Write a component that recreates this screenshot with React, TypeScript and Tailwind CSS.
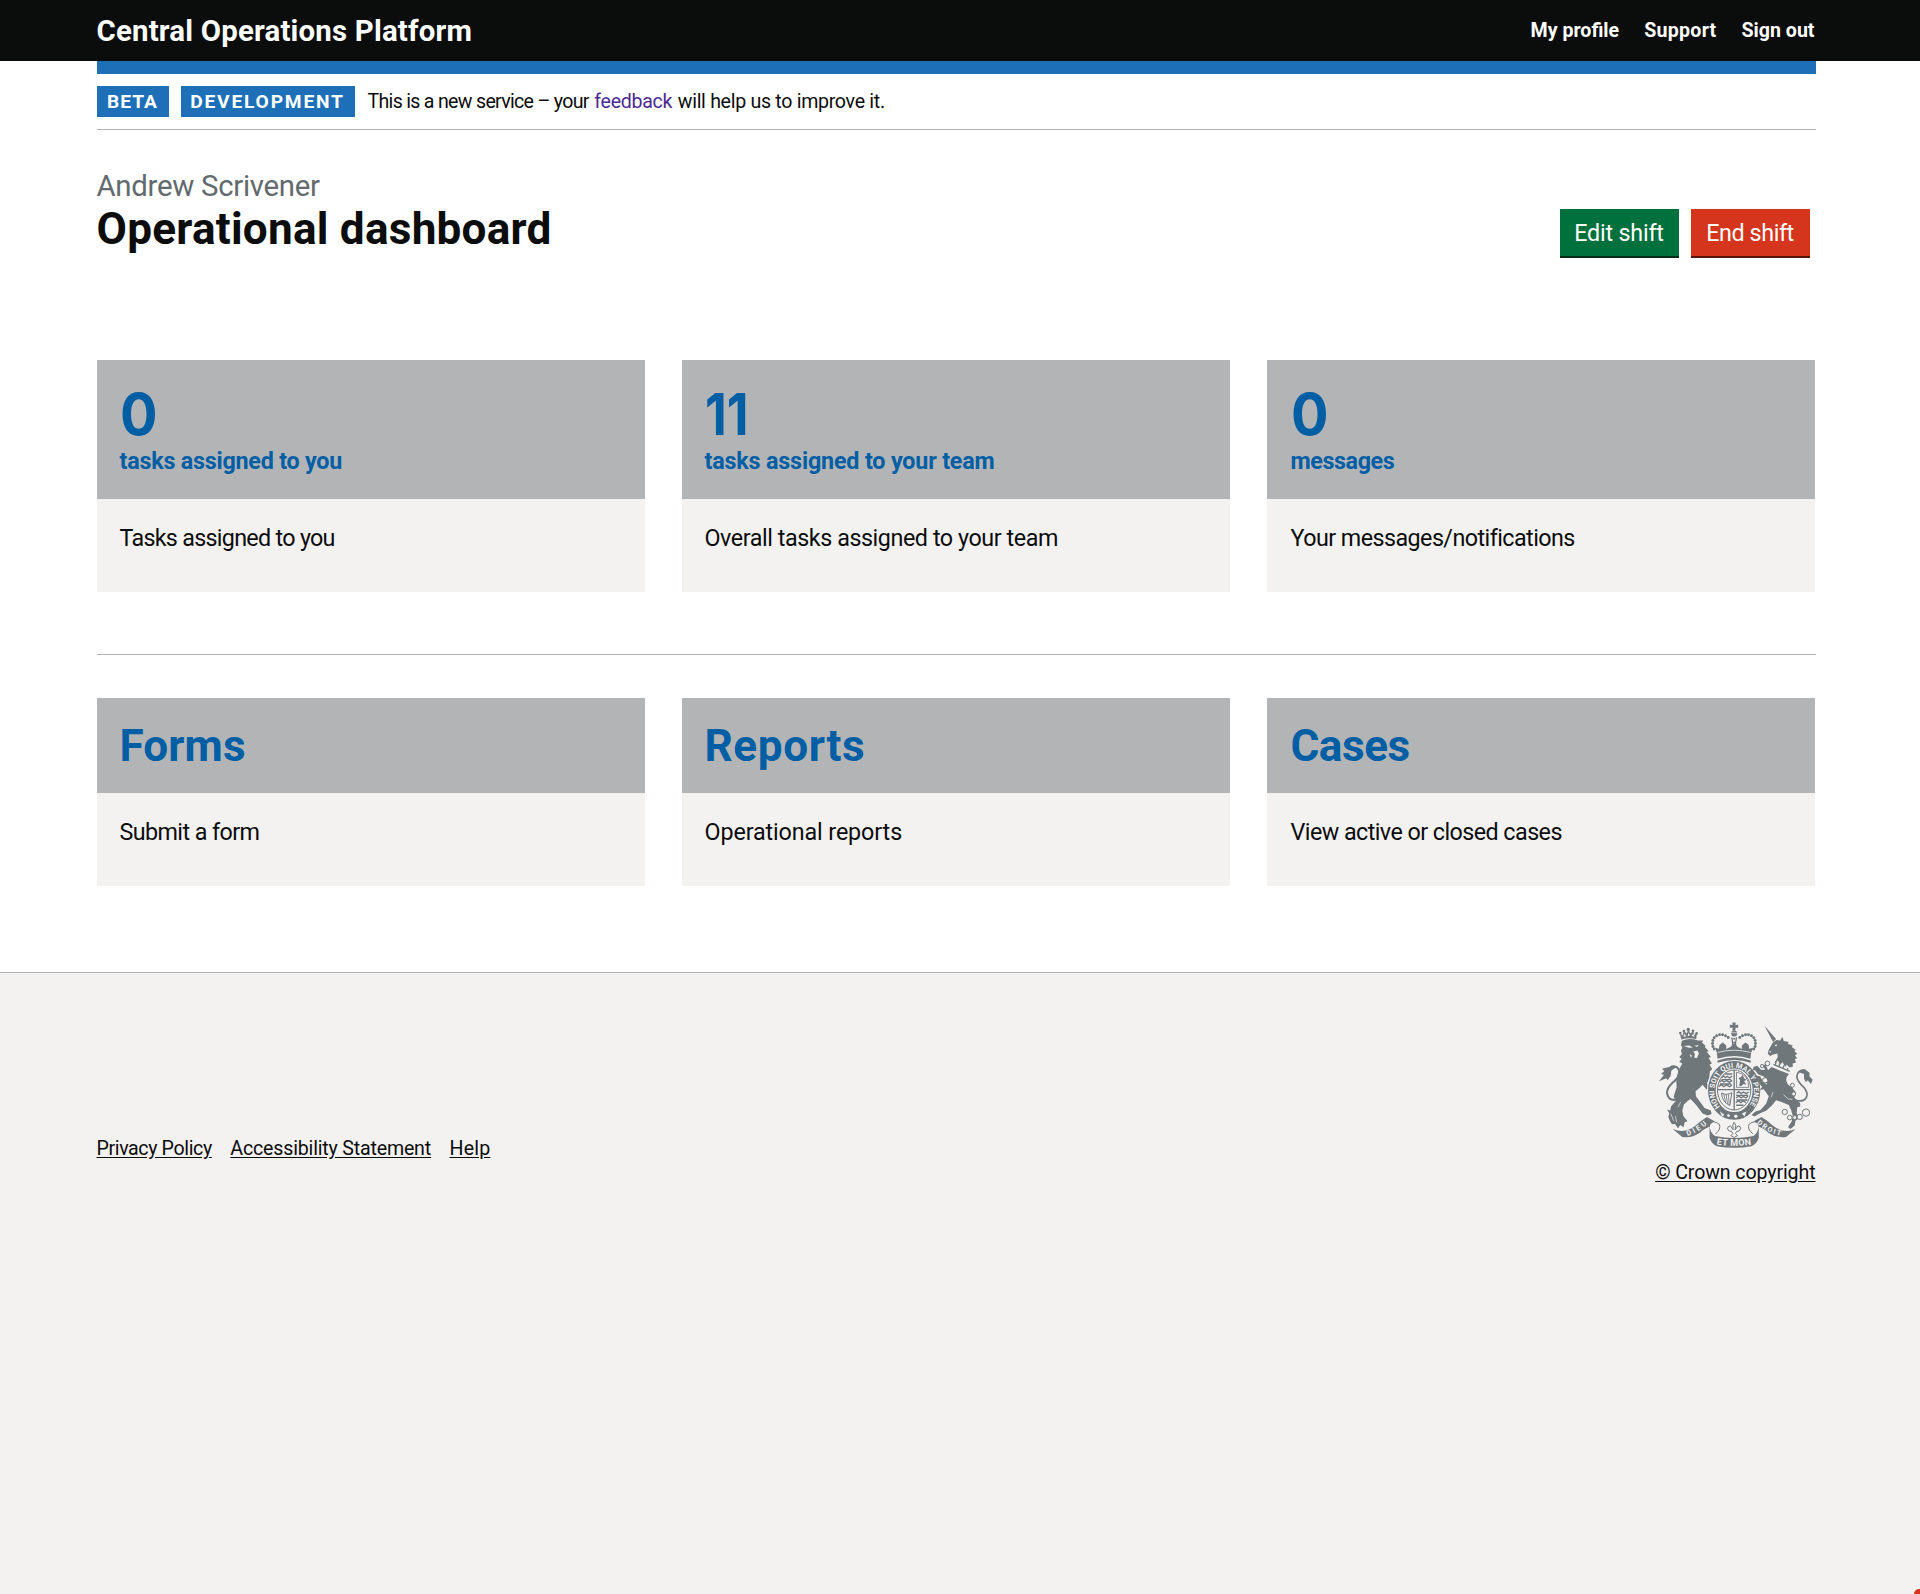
import type { ReactNode } from "react";

type CardProps = {
  title: ReactNode;
  text: string;
  textClass: string;
  tall?: boolean;
};

function Card({ title, text, textClass, tall = false }: CardProps) {
  return (
    <article className="flex flex-col">
      <a
        href="#"
        className={
          tall
            ? "block h-[139px] bg-[#b2b4b6] px-[23px] pt-6 font-bold text-[#005ea5]"
            : "block h-[95px] bg-[#b2b4b6] px-[23px] pt-6 font-bold text-[#005ea5]"
        }
      >
        {title}
      </a>
      <div className="h-[93px] bg-[#f3f2f1] px-[23px] pt-6">
        <p className={"text-[23.3px] leading-[30px] whitespace-nowrap " + textClass}>{text}</p>
      </div>
    </article>
  );
}

function Count({ value, label, labelClass, valueClass }: { value: string; label: string; labelClass: string; valueClass: string }) {
  return (
    <>
      <span className={"block w-fit origin-left font-[Inter,sans-serif] text-[58px] leading-[60px] " + valueClass}>{value}</span>
      <span className={"mt-0.5 block text-[23.3px] leading-[30px] " + labelClass}>{label}</span>
    </>
  );
}

function Lion() {
  return (
    <g>
      {/* crown */}
      <path d="M122 88 L118 70 L126 76 L130 63 L138 70 L143 58 L150 70 L158 62 L161 75 L169 69 L167 87 Q145 81 122 88Z" />
      <circle cx="119" cy="69" r="4" />
      <circle cx="130" cy="63" r="4" />
      <circle cx="143" cy="58" r="5" />
      <circle cx="157" cy="62" r="4" />
      <circle cx="168" cy="70" r="4" />
      <path d="M128 80 L132 71 L137 79Z M141 77 L144 67 L148 77Z M153 78 L158 70 L162 80Z" fill="#f3f2f1" />
      {/* head, mane and body */}
      <path d="M124 92 Q146 82 172 91 L188 91 L184 97 L195 107 L193 111 L204 123 L199 126 L211 141 L204 144 L214 160 L207 163 L215 178 L208 184 L206 205 L199 221 L207 229 L211 242 L204 244 L196 236 L186 224 Q176 236 165 244 L166 259 L181 279 L192 294 L211 302 L213 312 L202 317 L186 311 L168 287 L150 267 L142 272 L130 284 L125 302 L128 318 L141 334 L132 337 L129 352 L119 345 L112 355 L103 342 L94 343 L88 333 L83 321 L86 310 L79 299 L89 302 L91 290 L105 273 L99 260 L108 232 L107 212 L113 182 L125 160 L116 155 L123 147 L116 141 L124 132 L121 122 L125 112 L121 105Z" />
      <path d="M129 108 L146 106 L157 112 L145 113Z M162 107 L175 105 L169 111Z M158 124 L171 121 L175 131 L169 144 L161 143 L163 132Z M147 131 L154 137 L151 143Z" fill="#f3f2f1" />
      <path d="M120 276 L112 292 M104 318 L108 337 M91 312 L99 333" stroke="#f3f2f1" strokeWidth="2" fill="none" />
      {/* tail */}
      <path d="M104 270 Q82 272 79 249 Q79 234 95 219 Q117 201 116 185 Q113 169 101 170" fill="none" stroke="#6f777b" strokeWidth="6" />
      <path d="M110 170 Q95 161 86 171 L64 176 L71 183 L61 192 L70 194 L55 214 L77 205 L81 211 L90 198 L92 182 Q98 176 110 170Z" />
    </g>
  );
}

function Unicorn() {
  return (
    <g>
      {/* horn */}
      <path d="M372 47 L407 87 L398 96Z" />
      {/* head, mane */}
      <path d="M397 98 L408 90 L419 91 L426 81 L430 93 L445 96 L442 101 L457 106 L454 111 L466 119 L462 123 L471 132 L464 135 L470 145 L463 147 L467 157 L457 160 L457 170 L447 177 L402 158 L412 141 L411 130 L398 133 L389 138 L382 131 L385 119Z" />
      <path d="M402 105 L411 103 L407 109Z M386 125 L393 122 L389 129Z" fill="#f3f2f1" />
      {/* coronet collar */}
      <path d="M396 165 L448 188 L454 170 L446 172 L440 164 L434 170 L426 156 L420 164 L411 150 L408 159 L399 151Z" fill="#f3f2f1" />
      <path d="M399 163 L448 184 M405 156 L406 163 M417 160 L417 168 M430 166 L429 173 M443 174 L441 178" stroke="#6f777b" strokeWidth="4" fill="none" />
      {/* body */}
      <path d="M393 171 L446 192 Q434 203 439 216 Q442 226 454 231 L466 247 L462 263 L479 279 L480 290 L471 291 L469 309 L474 326 L465 333 L463 347 L450 357 L443 351 L454 335 L457 317 L452 300 L445 285 Q420 274 407 271 L395 286 L378 302 L359 310 L342 320 L333 315 L345 305 L360 300 L377 281 L385 259 L370 238 L358 240 L365 231 L357 221 L353 208 L346 202 L348 197 L359 199 L367 213 L380 224 L378 210 L371 200 L353 193 L344 181 L337 180 L339 171 L350 167 L362 179 L373 180 L369 164 L376 164 L383 181Z" />
      <path d="M398 246 L392 262 M429 254 L444 267 L456 268" stroke="#f3f2f1" strokeWidth="2" fill="none" />
      {/* tail */}
      <path d="M464 270 Q495 279 500 257 Q502 241 482 224 Q466 207 471 192 Q478 177 492 184" fill="none" stroke="#6f777b" strokeWidth="5" />
      <path d="M475 187 Q485 171 497 180 L508 189 L507 199 L517 209 L512 222 L502 211 L497 217 L491 206 L491 192Z" />
      {/* chain */}
      <g fill="#f3f2f1" stroke="#6f777b" strokeWidth="3">
        <circle cx="381" cy="160" r="7" />
        <circle cx="365" cy="168" r="5" />
        <circle cx="374" cy="211" r="8" />
        <circle cx="456" cy="226" r="6" />
        <circle cx="460" cy="252" r="6" />
        <circle cx="433" cy="306" r="8" />
        <circle cx="448" cy="323" r="7" />
        <circle cx="463" cy="323" r="6" />
        <circle cx="478" cy="321" r="8" />
        <circle cx="497" cy="308" r="11" />
      </g>
    </g>
  );
}

function RoyalCrown() {
  const pearls = [
    [221, 117], [217, 109], [216, 100], [217, 91], [221, 83], [228, 77], [237, 74], [246, 74], [255, 77], [263, 82],
    [298, 82], [306, 77], [315, 74], [324, 74], [333, 77], [340, 83], [344, 91], [345, 100], [344, 109], [340, 117],
  ];
  return (
    <g>
      <path d="M276 37 H285 V45 L293 43 V54 L285 52 V61 H276 V52 L268 54 V43 L276 45Z" />
      <circle cx="281" cy="70" r="9" />
      <path d="M269 68 H293" stroke="#f3f2f1" strokeWidth="2" />
      {pearls.map(([x, y]) => (
        <circle key={`${x}-${y}`} cx={x} cy={y} r="4.4" />
      ))}
      <path d="M274 82 Q278 100 276 116 M288 82 Q283 100 286 116" fill="none" stroke="#6f777b" strokeWidth="4" />
      <circle cx="281" cy="86" r="3" />
      <circle cx="281" cy="97" r="3" />
      <path d="M229 128 L224 113 L235 116 L237 105 L247 97 L257 106 L257 117 L270 111 L281 99 L292 111 L304 117 L304 106 L315 97 L325 105 L326 116 L338 113 L332 128 L330 146 Q281 130 231 146Z" />
      <path d="M232 127 Q281 114 330 127" stroke="#f3f2f1" strokeWidth="2.4" fill="none" />
      <path d="M231 151 Q281 134 331 151 V158 Q281 141 231 158Z" />
    </g>
  );
}

function Shield() {
  return (
    <g>
      <ellipse cx="281" cy="241" rx="82" ry="92" fill="#f3f2f1" />
      <ellipse cx="281" cy="241" rx="67" ry="77" fill="none" stroke="#6f777b" strokeWidth="23" />
      <ellipse cx="281" cy="240" rx="50" ry="60" fill="#f3f2f1" stroke="#6f777b" strokeWidth="3" />
      {/* garter motto */}
      <path id="garter" d="M239 291 A59 69 0 1 1 323 291" fill="none" />
      <text className="font-[Roboto,sans-serif] font-bold" fontSize="22" fill="#f3f2f1">
        <textPath href="#garter" textLength="298" lengthAdjust="spacing">HONI SOIT QUI MAL Y PENSE</textPath>
      </text>
      <g fill="#f3f2f1">
        <circle cx="264" cy="317" r="4" />
        <circle cx="286" cy="319" r="5" />
        <path d="M238 304 L252 315 L244 319Z M304 311 L318 305 L312 320Z" />
      </g>
      {/* quarterings */}
      <path d="M281 180 V300 M232 239 H330" stroke="#6f777b" strokeWidth="4" />
      <path d="M243 204 L249 197 L254 203 L260 199 L267 204 L275 198 M237 217 L244 211 L250 216 L259 212 L266 217 L275 211 M234 230 L243 224 L250 230 L258 225 L267 230 L275 224 M243 209 H272 M238 222 H272 M253 192 H275" fill="none" stroke="#6f777b" strokeWidth="4" />
      <path d="M288 250 L295 245 L302 251 L309 246 L317 251 L325 246 M287 264 L295 258 L302 264 L309 259 L316 264 L323 258 M286 278 L294 272 L301 278 L308 273 L316 277 M287 256 H323 M288 270 H321 M287 286 H309" fill="none" stroke="#6f777b" strokeWidth="4" />
      <path d="M288 187 Q305 188 316 201 Q325 214 325 232 H288Z" fill="none" stroke="#6f777b" strokeWidth="2.5" />
      <path d="M296 227 L299 211 L294 204 L302 201 L306 194 L311 205 L317 209 L311 214 L318 224 L309 222 L303 228Z" />
      <path d="M243 249 Q244 276 268 287 L274 248 Q258 258 243 249Z" fill="none" stroke="#6f777b" strokeWidth="3" />
      <path d="M250 252 L255 277 M257 254 L261 282 M264 253 L266 285" stroke="#6f777b" strokeWidth="2.5" />
    </g>
  );
}

function Ribbon() {
  return (
    <g>
      <path d="M96 357 Q134 373 165 347 Q184 330 199 321 L222 334 Q207 342 208 350 Q195 354 177 369 Q153 385 125 381Z" />
      <path d="M466 357 Q430 373 397 347 Q379 330 363 321 L340 334 Q355 342 354 350 Q367 354 385 369 Q409 385 437 381Z" />
      <path d="M205 341 Q219 329 236 343 Q243 357 225 372" fill="none" stroke="#6f777b" strokeWidth="3" />
      <path d="M357 341 Q343 329 326 343 Q319 357 337 372" fill="none" stroke="#6f777b" strokeWidth="3" />
      <path d="M207 348 Q209 369 223 378 Q281 391 339 378 Q353 369 355 348 L355 384 Q348 403 333 409 Q281 419 229 409 Q214 403 207 384Z" />
      <path d="M277 345 L281 337 L286 346 L284 360 L292 348 Q302 348 300 357 Q297 366 289 364 L285 371 L291 377 L281 383 L271 377 L277 371 L273 364 Q264 366 261 357 Q261 348 270 348 L278 360Z" fill="#f3f2f1" stroke="#6f777b" strokeWidth="3" />
      <path id="dieu" d="M141 378 Q174 368 208 336" fill="none" />
      <path id="etmon" d="M228 404 Q281 412 335 404" fill="none" />
      <path id="droit" d="M349 339 Q380 370 428 379" fill="none" />
      <g className="font-[Roboto,sans-serif] font-bold" fill="#f3f2f1">
        <text fontSize="22"><textPath href="#dieu" textLength="68">DIEU</textPath></text>
        <text fontSize="27"><textPath href="#etmon" textLength="105">ET MON</textPath></text>
        <text fontSize="21"><textPath href="#droit" textLength="82">DROIT</textPath></text>
      </g>
    </g>
  );
}

function RoyalArms() {
  return (
    <svg viewBox="55 36 463 378" className="mr-[3px] h-[126px] w-[154px]" fill="#6f777b" aria-hidden="true">
      <Lion />
      <Shield />
      <Unicorn />
      <RoyalCrown />
      <Ribbon />
    </svg>
  );
}

export default function App() {
  return (
    <div className="relative flex min-h-[1594px] flex-col overflow-hidden bg-white font-[Roboto,sans-serif] text-[#0b0c0c]">
      <header className="h-[61px] bg-[#0b0c0c] text-white">
        <div className="mx-auto flex h-full w-[1719px] -translate-x-[4px] items-center justify-between pt-px font-bold">
          <a href="#" className="text-[29.4px] tracking-[0.2px]">Central Operations Platform</a>
          <nav className="mr-px flex gap-[25px] text-[19.6px]">
            <a href="#">My profile</a>
            <a href="#" className="tracking-[0.28px]">Support</a>
            <a href="#">Sign out</a>
          </nav>
        </div>
      </header>

      <div className="mx-auto w-[1719px] -translate-x-[4px]">
        <div className="h-[13px] bg-[#1d70b8]" />
        <div className="flex h-[56px] items-center gap-3 border-b border-[#b1b4b6]">
          <strong className="flex h-[31px] w-[72px] items-center justify-center bg-[#1d70b8] pt-px text-[19.2px] tracking-[1px] text-white">BETA</strong>
          <strong className="flex h-[31px] w-[174px] items-center justify-center bg-[#1d70b8] pt-px text-[19.2px] tracking-[1.8px] text-white">DEVELOPMENT</strong>
          <p className="ml-px flex gap-[5.5px] pt-px text-[19.6px]">
            <span className="tracking-[-0.7px]">This is a new service – your</span>
            <a href="#" className="tracking-[-0.28px] text-[#4c2c92]">feedback</a>
            <span className="tracking-[-0.3px]">will help us to improve it.</span>
          </p>
        </div>

        <main className="pt-[38px]">
          <div className="flex h-[192px] items-start justify-between">
            <div>
              <span className="block text-[29.4px] leading-[37px] tracking-[-0.3px] text-[#626a6e]">Andrew Scrivener</span>
              <h1 className="text-[44.1px] leading-[48px] font-bold tracking-[0.24px]">Operational dashboard</h1>
            </div>
            <div className="mt-[41px] mr-[6px] flex gap-3 text-[23.3px] text-white">
              <button className="h-[49px] w-[119px] border-b-2 border-[#002d18] bg-[#00703c] pt-0.5 tracking-[-0.2px]">Edit shift</button>
              <button className="h-[49px] w-[119px] border-b-2 border-[#55150b] bg-[#d4351c] pt-0.5 tracking-[-0.4px]">End shift</button>
            </div>
          </div>

          <section className="mr-px grid grid-cols-3 gap-[37px]">
            <Card tall title={<Count value="0" label="tasks assigned to you" labelClass="tracking-[-0.22px]" valueClass="scale-x-[0.96]" />} text="Tasks assigned to you" textClass="tracking-[-0.7px]" />
            <Card tall title={<Count value="11" label="tasks assigned to your team" labelClass="tracking-[-0.17px]" valueClass="scale-x-[0.87]" />} text="Overall tasks assigned to your team" textClass="tracking-[-0.43px]" />
            <Card tall title={<Count value="0" label="messages" labelClass="ml-px tracking-[-0.4px]" valueClass="ml-px scale-x-[0.96]" />} text="Your messages/notifications" textClass="ml-px tracking-[-0.55px]" />
          </section>

          <hr className="mt-[62px] mb-[43px] border-[#b1b4b6]" />

          <section className="mr-px mb-[86px] grid grid-cols-3 gap-[37px]">
            <Card title={<span className="block text-[44.1px] leading-[48px] tracking-[0.1px]">Forms</span>} text="Submit a form" textClass="tracking-[-0.58px]" />
            <Card title={<span className="block text-[44.1px] leading-[48px] tracking-[0.6px]">Reports</span>} text="Operational reports" textClass="tracking-[-0.11px]" />
            <Card title={<span className="ml-px block text-[44.1px] leading-[48px] tracking-[-0.48px]">Cases</span>} text="View active or closed cases" textClass="ml-px tracking-[-0.55px]" />
          </section>
        </main>
      </div>

      <footer className="flex-1 border-t border-[#b1b4b6] bg-[#f3f2f1] pt-[49px]">
        <div className="mx-auto flex w-[1719px] -translate-x-[4px] items-start justify-between text-[19.6px] leading-6 underline-offset-2">
          <nav className="mt-[115px] flex gap-[18.5px]">
            <a href="#" className="tracking-[-0.38px] underline">Privacy Policy</a>
            <a href="#" className="tracking-[-0.18px] underline">Accessibility Statement</a>
            <a href="#" className="tracking-[0.17px] underline">Help</a>
          </nav>
          <div className="flex flex-col items-end gap-[13px]">
            <RoyalArms />
            <a href="#" className="tracking-[-0.11px] underline">© Crown copyright</a>
          </div>
        </div>
      </footer>

      <span className="absolute right-0 bottom-0 h-[5px] w-[6px] rounded-tl-full bg-[#d4351c]" />
    </div>
  );
}
